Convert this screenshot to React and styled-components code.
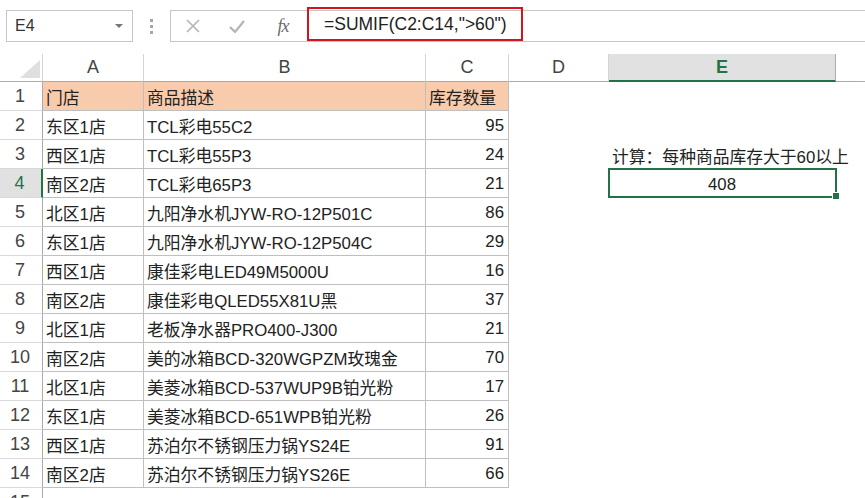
import React from 'react';
import styled, { createGlobalStyle, css } from 'styled-components';

const GREEN = '#217346';

const GlobalStyle = createGlobalStyle`
  html, body {
    margin: 0;
    padding: 0;
    background: #fff;
    overflow: hidden;
  }
  body {
    font-family: "Liberation Sans", "Noto Sans CJK SC", sans-serif;
    color: #222;
  }
`;

const Page = styled.div`
  width: 865px;
  height: 498px;
  overflow: hidden;
`;

const Toolbar = styled.div`
  display: flex;
  align-items: flex-start;
  height: 54px;
  padding: 10px 0 0 6px;
  box-sizing: border-box;
`;

const NameBox = styled.div`
  width: 127px;
  height: 32px;
  box-sizing: border-box;
  border: 1px solid #c6c6c6;
  display: flex;
  align-items: center;
  justify-content: space-between;
  padding: 0 8px 0 8px;
  font-size: 16px;
  color: #333;
`;

const DropArrow = styled.span`
  width: 0;
  height: 0;
  border-left: 4px solid transparent;
  border-right: 4px solid transparent;
  border-top: 4px solid #777;
  margin-right: 1px;
`;

const Grip = styled.div`
  width: 37px;
  height: 32px;
  display: flex;
  flex-direction: column;
  align-items: center;
  justify-content: center;
  gap: 3px;
  span {
    width: 3px;
    height: 3px;
    background: #a6a6a6;
  }
`;

const FormulaBox = styled.div`
  flex: 1;
  height: 32px;
  box-sizing: border-box;
  border: 1px solid #c6c6c6;
  border-right: none;
  display: flex;
  align-items: flex-start;
`;

const ToolButton = styled.div`
  width: ${p => p.$w}px;
  height: 30px;
  display: flex;
  align-items: center;
  justify-content: center;
`;

const Fx = styled.span`
  font-family: "Liberation Serif", "DejaVu Serif", serif;
  font-style: italic;
  font-size: 18px;
  color: #6a6a6a;
  letter-spacing: -1px;
`;

const FormulaText = styled.div`
  height: 34px;
  width: 216px;
  margin-top: -4px;
  box-sizing: border-box;
  border: 2px solid #d4141c;
  display: flex;
  align-items: center;
  padding-left: 15px;
  font-size: 17.5px;
  color: #222;
  white-space: nowrap;
`;

const Sheet = styled.div`
  display: grid;
  grid-template-columns: 43px 101px 282px 83px 100px 227px 1fr;
  grid-template-rows: 28px;
  grid-auto-rows: 29px;
`;

const ColHead = styled.div`
  box-sizing: border-box;
  border-bottom: 1px solid #ababab;
  border-right: 1px solid #d4d4d4;
  display: flex;
  align-items: center;
  justify-content: center;
  font-size: 18px;
  color: #444;
  position: relative;
  ${p => p.$active && css`
    background: #e1e1e1;
    color: ${GREEN};
    font-weight: 600;
    border-bottom: 2px solid ${GREEN};
    border-right: 1px solid #ababab;
  `}
  ${p => p.$last && css`border-right: none;`}
`;

const Corner = styled(ColHead)`
  align-items: flex-end;
  justify-content: flex-end;
  padding: 0 2px 3px 0;
`;

const RowHead = styled.div`
  box-sizing: border-box;
  border-bottom: 1px solid #d9d9d9;
  border-right: 1px solid #ababab;
  display: flex;
  align-items: center;
  justify-content: center;
  font-size: 18px;
  color: #444;
  padding-right: 2px;
  ${p => p.$active && css`
    background: #e1e1e1;
    color: ${GREEN};
    border-right: 2px solid ${GREEN};
  `}
`;

const Cell = styled.div`
  box-sizing: border-box;
  display: flex;
  align-items: center;
  justify-content: ${p => (p.$align === 'right' ? 'flex-end' : p.$align === 'center' ? 'center' : 'flex-start')};
  padding: 2px 4px 0 3px;
  font-size: 16.8px;
  color: #222;
  white-space: nowrap;
  position: relative;
  background: ${p => p.$fill || 'transparent'};
  ${p => p.$bordered && css`
    border-right: 1px solid #bfbfbf;
    border-bottom: 1px solid #bfbfbf;
  `}
`;

const Selection = styled.div`
  position: absolute;
  left: -1px;
  top: -1px;
  right: -1px;
  bottom: 0;
  border: 2px solid ${GREEN};
  pointer-events: none;
`;

const FillHandle = styled.div`
  position: absolute;
  right: -5px;
  bottom: -4px;
  width: 6px;
  height: 6px;
  background: ${GREEN};
  border: 1px solid #fff;
`;

const rows = [
  ['门店', '商品描述', '库存数量'],
  ['东区1店', 'TCL彩电55C2', '95'],
  ['西区1店', 'TCL彩电55P3', '24'],
  ['南区2店', 'TCL彩电65P3', '21'],
  ['北区1店', '九阳净水机JYW-RO-12P501C', '86'],
  ['东区1店', '九阳净水机JYW-RO-12P504C', '29'],
  ['西区1店', '康佳彩电LED49M5000U', '16'],
  ['南区2店', '康佳彩电QLED55X81U黑', '37'],
  ['北区1店', '老板净水器PRO400-J300', '21'],
  ['南区2店', '美的冰箱BCD-320WGPZM玫瑰金', '70'],
  ['北区1店', '美菱冰箱BCD-537WUP9B铂光粉', '17'],
  ['东区1店', '美菱冰箱BCD-651WPB铂光粉', '26'],
  ['西区1店', '苏泊尔不锈钢压力锅YS24E', '91'],
  ['南区2店', '苏泊尔不锈钢压力锅YS26E', '66'],
];

const PEACH = '#f8cbad';

const App = () => {
  return (
    <Page>
      <GlobalStyle />
      <Toolbar>
        <NameBox>
          <span>E4</span>
          <DropArrow />
        </NameBox>
        <Grip><span /><span /><span /></Grip>
        <FormulaBox>
          <ToolButton $w={44}>
            <svg width="14" height="14" viewBox="0 0 14 14">
              <path d="M1 1 L13 13 M13 1 L1 13" stroke="#b4b4b4" strokeWidth="1.6" fill="none" />
            </svg>
          </ToolButton>
          <ToolButton $w={44}>
            <svg width="16" height="13" viewBox="0 0 16 13">
              <path d="M1 7 L6 12 L15 1" stroke="#b4b4b4" strokeWidth="2.2" fill="none" />
            </svg>
          </ToolButton>
          <ToolButton $w={48}>
            <Fx>fx</Fx>
          </ToolButton>
          <FormulaText>=SUMIF(C2:C14,"&gt;60")</FormulaText>
        </FormulaBox>
      </Toolbar>

      <Sheet>
        <Corner>
          <svg width="20" height="18" viewBox="0 0 20 18">
            <polygon points="20,0 20,18 0,18" fill="#dfdfdf" />
          </svg>
        </Corner>
        <ColHead>A</ColHead>
        <ColHead>B</ColHead>
        <ColHead>C</ColHead>
        <ColHead>D</ColHead>
        <ColHead $active>E</ColHead>
        <ColHead $last />

        {rows.map((r, i) => {
          const n = i + 1;
          return (
            <React.Fragment key={n}>
              <RowHead $active={n === 4}>{n}</RowHead>
              <Cell $bordered $fill={n === 1 ? PEACH : null}>{r[0]}</Cell>
              <Cell $bordered $fill={n === 1 ? PEACH : null}>{r[1]}</Cell>
              <Cell $bordered $fill={n === 1 ? PEACH : null} $align={n === 1 ? 'left' : 'right'}>{r[2]}</Cell>
              <Cell />
              {n === 3 && <Cell>计算：每种商品库存大于60以上</Cell>}
              {n === 4 && (
                <Cell $align="center">
                  408
                  <Selection><FillHandle /></Selection>
                </Cell>
              )}
              {n !== 3 && n !== 4 && <Cell />}
              <Cell />
            </React.Fragment>
          );
        })}
        <RowHead>15</RowHead>
      </Sheet>
    </Page>
  );
};

export default App;
